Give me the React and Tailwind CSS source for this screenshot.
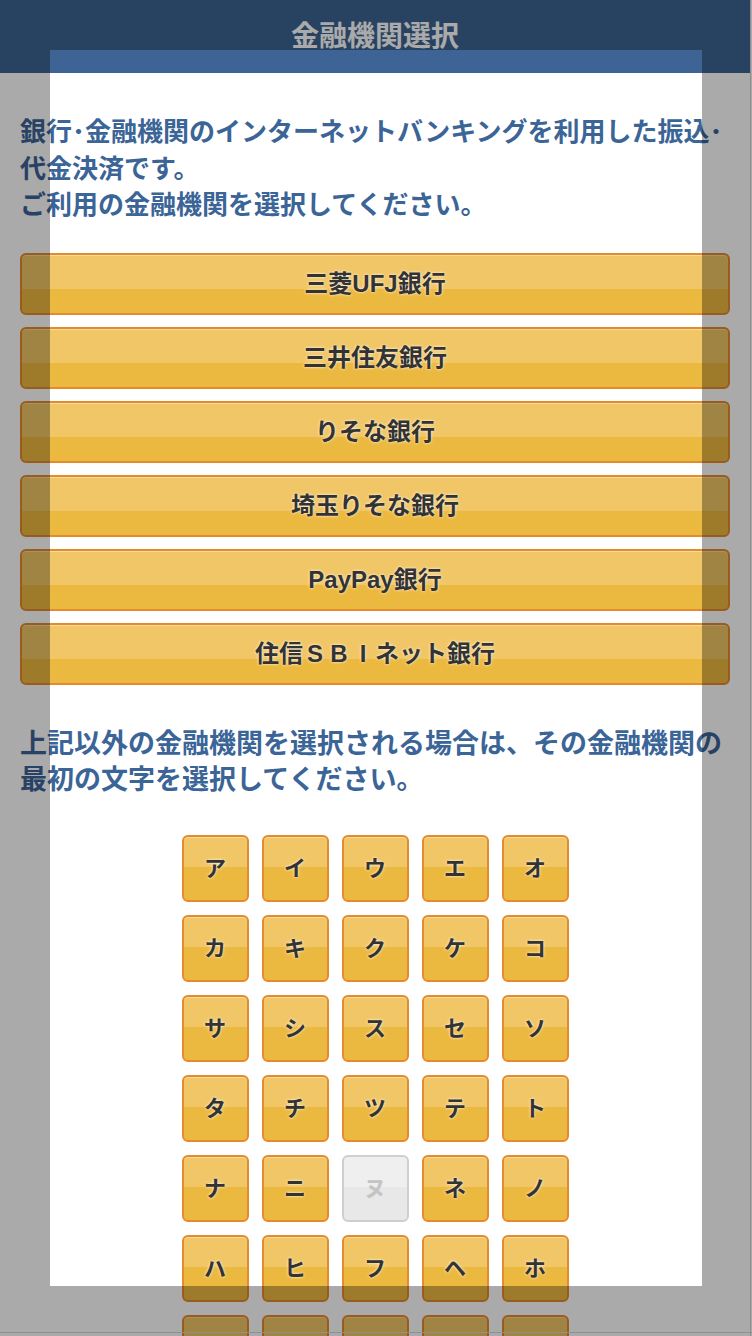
const banks = ["三菱UFJ銀行", "三井住友銀行", "りそな銀行", "埼玉りそな銀行", "PayPay銀行", "住信SBIネット銀行"]

const kana = [
  "ア", "イ", "ウ", "エ", "オ",
  "カ", "キ", "ク", "ケ", "コ",
  "サ", "シ", "ス", "セ", "ソ",
  "タ", "チ", "ツ", "テ", "ト",
  "ナ", "ニ", "ヌ", "ネ", "ノ",
  "ハ", "ヒ", "フ", "ヘ", "ホ",
  "マ", "ミ", "ム", "メ", "モ",
]

const disabled = ["ヌ"]

// full-width latin letters drawn as plain letters in 1em boxes
const BankName = ({ name }) => {
  const parts = name.split(/(SBI)/)
  return parts.map((p, i) =>
    p === "SBI" ? (
      <span key={i}>
        {p.split("").map((c) => (
          <span key={c} className="inline-block w-[24px] text-center">
            {c}
          </span>
        ))}
      </span>
    ) : (
      <span key={i}>{p}</span>
    )
  )
}

const BankButton = ({ name }) => (
  <button className="h-[62px] w-full rounded-[6px] border-2 border-[#e68a2e] bg-[linear-gradient(to_bottom,#f0c667_0%,#f0c667_59%,#ecb940_59%,#ecb940_100%)] shadow-[inset_0_1px_0_#f8dc9a] text-[24px] font-bold text-[#333] [text-shadow:0_0_3px_#fff]">
    <BankName name={name} />
  </button>
)

const KanaButton = ({ label }) => {
  const off = disabled.includes(label)
  if (off) {
    return (
      <button className="h-[67px] w-[67px] rounded-[6px] border-2 border-[#cfcfcf] bg-[linear-gradient(to_bottom,#efefef_0%,#efefef_47%,#e8e8e8_47%,#e8e8e8_100%)] text-[22px] font-bold text-[#c4c4c4]">
        {label}
      </button>
    )
  }
  return (
    <button className="h-[67px] w-[67px] rounded-[6px] border-2 border-[#e68a2e] bg-[linear-gradient(to_bottom,#f0c667_0%,#f0c667_47%,#ecb940_47%,#ecb940_100%)] shadow-[inset_0_1px_0_#f8dc9a] text-[22px] font-bold text-[#333] [text-shadow:0_0_3px_#fff]">
      {label}
    </button>
  )
}

export default function App() {
  return (
    <div className="relative min-h-screen w-[751px] border-r border-[#d6d6d6] bg-white font-['Liberation_Sans','Noto_Sans_CJK_JP',sans-serif]">
      <header className="flex h-[73px] items-center justify-center bg-[#3d6494]">
        <h1 className="text-[28px] font-bold text-white">金融機関選択</h1>
      </header>

      <main className="px-5 pt-[41px] pb-10">
        <p className="text-[26px] font-bold leading-[36.5px] text-[#3b6497]">
          銀行･金融機関のインターネットバンキングを利用した振込･代金決済です。
          <br />
          ご利用の金融機関を選択してください。
        </p>

        <div className="mt-[29px] flex flex-col gap-3">
          {banks.map((b) => (
            <BankButton key={b} name={b} />
          ))}
        </div>

        <p className="mt-[41px] text-[27px] font-bold leading-[36px] text-[#3b6497]">
          上記以外の金融機関を選択される場合は、その金融機関の最初の文字を選択してください。
        </p>

        <div className="mt-[37px] grid grid-cols-[repeat(5,67px)] justify-center gap-[13px]">
          {kana.map((k) => (
            <KanaButton key={k} label={k} />
          ))}
        </div>
      </main>

      {/* dimmed overlay with a clear window */}
      <div className="pointer-events-none fixed inset-0 overflow-hidden">
        <div className="absolute left-[50px] top-[50px] h-[1236px] w-[652px] shadow-[0_0_0_2000px_rgba(0,0,0,0.333)]" />
        <div className="absolute left-0 top-0 h-[1333px] w-[752px] border-b border-[#8e8e8e]" />
      </div>
    </div>
  )
}
